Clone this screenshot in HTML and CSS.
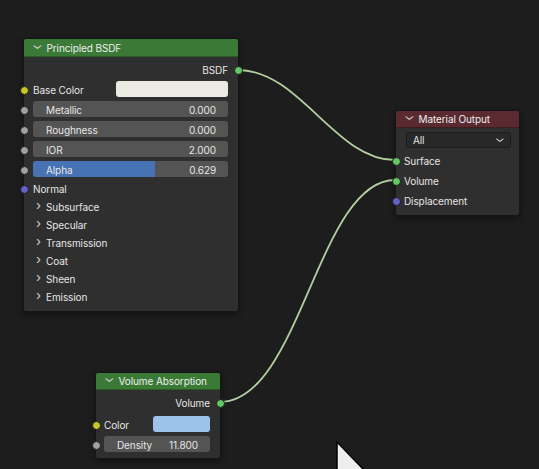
FILE: index.html
```html
<!DOCTYPE html>
<html>
<head>
<meta charset="utf-8">
<link rel="stylesheet" href="styles.css">
</head>
<body>
<div class="canvas">
  <svg class="wires" width="539" height="469" viewBox="0 0 539 469">
    <path d="M238 70 C 300 70, 335 160, 395 160" />
    <path d="M220 402 C 300 402, 318 180, 395 180" />
  </svg>

  <div class="node bsdf">
    <div class="head green"><span class="chev">⌄</span><span>Principled BSDF</span></div>
    <div class="body">
      <div class="row out"><span class="lbl">BSDF</span><i class="sock shader right"></i></div>
      <div class="row"><i class="sock color"></i><span class="lbl">Base Color</span><span class="swatch white"></span></div>
      <div class="row"><i class="sock float"></i><div class="field"><span>Metallic</span><span>0.000</span></div></div>
      <div class="row"><i class="sock float"></i><div class="field"><span>Roughness</span><span>0.000</span></div></div>
      <div class="row"><i class="sock float"></i><div class="field"><span>IOR</span><span>2.000</span></div></div>
      <div class="row"><i class="sock float"></i><div class="field alpha"><span>Alpha</span><span>0.629</span></div></div>
      <div class="row short"><i class="sock vector"></i><span class="lbl">Normal</span></div>
      <div class="row short panel"><span class="pchev">›</span><span class="lbl">Subsurface</span></div>
      <div class="row short panel"><span class="pchev">›</span><span class="lbl">Specular</span></div>
      <div class="row short panel"><span class="pchev">›</span><span class="lbl">Transmission</span></div>
      <div class="row short panel"><span class="pchev">›</span><span class="lbl">Coat</span></div>
      <div class="row short panel"><span class="pchev">›</span><span class="lbl">Sheen</span></div>
      <div class="row short panel"><span class="pchev">›</span><span class="lbl">Emission</span></div>
    </div>
  </div>

  <div class="node matout">
    <div class="head red"><span class="chev">⌄</span><span>Material Output</span></div>
    <div class="body">
      <div class="row"><div class="dropdown"><span>All</span><span class="dchev">⌄</span></div></div>
      <div class="row"><i class="sock shader"></i><span class="lbl">Surface</span></div>
      <div class="row"><i class="sock shader"></i><span class="lbl">Volume</span></div>
      <div class="row"><i class="sock vector"></i><span class="lbl">Displacement</span></div>
    </div>
  </div>

  <div class="node volabs">
    <div class="head green"><span class="chev">⌄</span><span>Volume Absorption</span></div>
    <div class="body">
      <div class="row out"><span class="lbl">Volume</span><i class="sock shader right"></i></div>
      <div class="row gap"><i class="sock color"></i><span class="lbl">Color</span><span class="swatch blue"></span></div>
      <div class="row"><i class="sock float"></i><div class="field"><span>Density</span><span>11.800</span></div></div>
    </div>
  </div>

  <svg class="cursor" width="40" height="30" viewBox="0 0 40 30">
    <polygon points="1,1 1,29 28,29" />
  </svg>
</div>
</body>
</html>
```

FILE: styles.css
```css
html, body {
  margin: 0;
  padding: 0;
  background: #1d1d1d;
}
.canvas {
  position: relative;
  width: 539px;
  height: 469px;
  overflow: hidden;
  background: #1d1d1d;
  font-family: Inter, "Noto Sans", "DejaVu Sans", sans-serif;
  font-size: 10px;
  letter-spacing: -0.1px;
  color: #e6e6e6;
}
.wires {
  position: absolute;
  left: 0;
  top: 0;
}
.wires path {
  fill: none;
  stroke: #b3cfa0;
  stroke-width: 1.8;
}
.node {
  position: absolute;
  background: #2f2f2f;
  border: 1px solid #161616;
  border-radius: 3px;
  box-shadow: 0 2px 6px rgba(0,0,0,0.45);
  box-sizing: border-box;
}
.bsdf { left: 23px; top: 38px; width: 216px; height: 274px; }
.matout { left: 395px; top: 110px; width: 125px; height: 106px; }
.volabs { left: 95px; top: 372px; width: 126px; height: 87px; }

.head {
  height: 18px;
  display: flex;
  align-items: center;
  gap: 5px;
  padding-left: 9px;
  border-radius: 2px 2px 0 0;
  color: #efefef;
  box-sizing: border-box;
}
.matout .head, .volabs .head { height: 17px; }
.green { background: #3b7a36; border-bottom: 1px solid #2a5a26; }
.red { background: #5a2a30; border-bottom: 1px solid #3e1d21; }
.chev {
  font-size: 11px;
  line-height: 1;
  margin-top: -5px;
  transform: scaleX(1.3);
  color: #d8d8d8;
}
.body {
  display: flex;
  flex-direction: column;
  padding-top: 2px;
}
.row {
  position: relative;
  height: 20px;
  display: flex;
  align-items: center;
  padding: 0 10px 0 9px;
}
.row.short { height: 18px; }
.row.out { justify-content: flex-end; }
.row.gap { margin-top: 2px; }
.lbl {
  flex: 0 0 auto;
  position: relative;
  top: 1px;
}
.swatch {
  margin-left: auto;
  height: 16px;
  border-radius: 3px;
}
.swatch.white { width: 112px; background: #ebebe4; }
.swatch.blue { width: 57px; background: #9ec3ea; }
.field {
  flex: 1;
  height: 16px;
  background: #545454;
  border-radius: 3px;
  display: flex;
  justify-content: space-between;
  align-items: center;
  padding: 0 12px 0 13px;
  box-sizing: border-box;
}
.field span {
  position: relative;
  top: 0.5px;
}
.field.alpha {
  background: linear-gradient(to right, #4772b3 0, #4772b3 62.5%, #545454 62.5%);
}
.panel { padding-left: 12px; }
.pchev {
  font-size: 13px;
  width: 10px;
  color: #d0d0d0;
  line-height: 1;
  margin-top: -1px;
}
.sock {
  position: absolute;
  left: -4.5px;
  top: 50%;
  width: 7px;
  height: 7px;
  margin-top: -3.5px;
  border-radius: 50%;
  border: 0.5px solid #1a1a1a;
}
.sock.right { left: auto; right: -4.5px; }
.sock.shader { background: #63c763; }
.sock.color { background: #c7c729; }
.sock.float { background: #a1a1a1; }
.sock.vector { background: #6363c7; }
.dropdown {
  flex: 1;
  height: 16px;
  background: #282828;
  border: 1px solid #1c1c1c;
  border-radius: 3px;
  display: flex;
  justify-content: space-between;
  align-items: center;
  padding: 0 6px 0 6px;
  box-sizing: border-box;
  margin: 0 -2px 0 2px;
}
.dchev { font-size: 10px; margin-top: -5px; transform: scaleX(1.3); }
.matout .row { padding-left: 8px; }
.volabs .row { padding-left: 8px; padding-right: 10px; }
.cursor {
  position: absolute;
  left: 336px;
  top: 441px;
}
.cursor polygon {
  fill: #eeeeee;
  stroke: #000;
  stroke-width: 1.5;
}
```
